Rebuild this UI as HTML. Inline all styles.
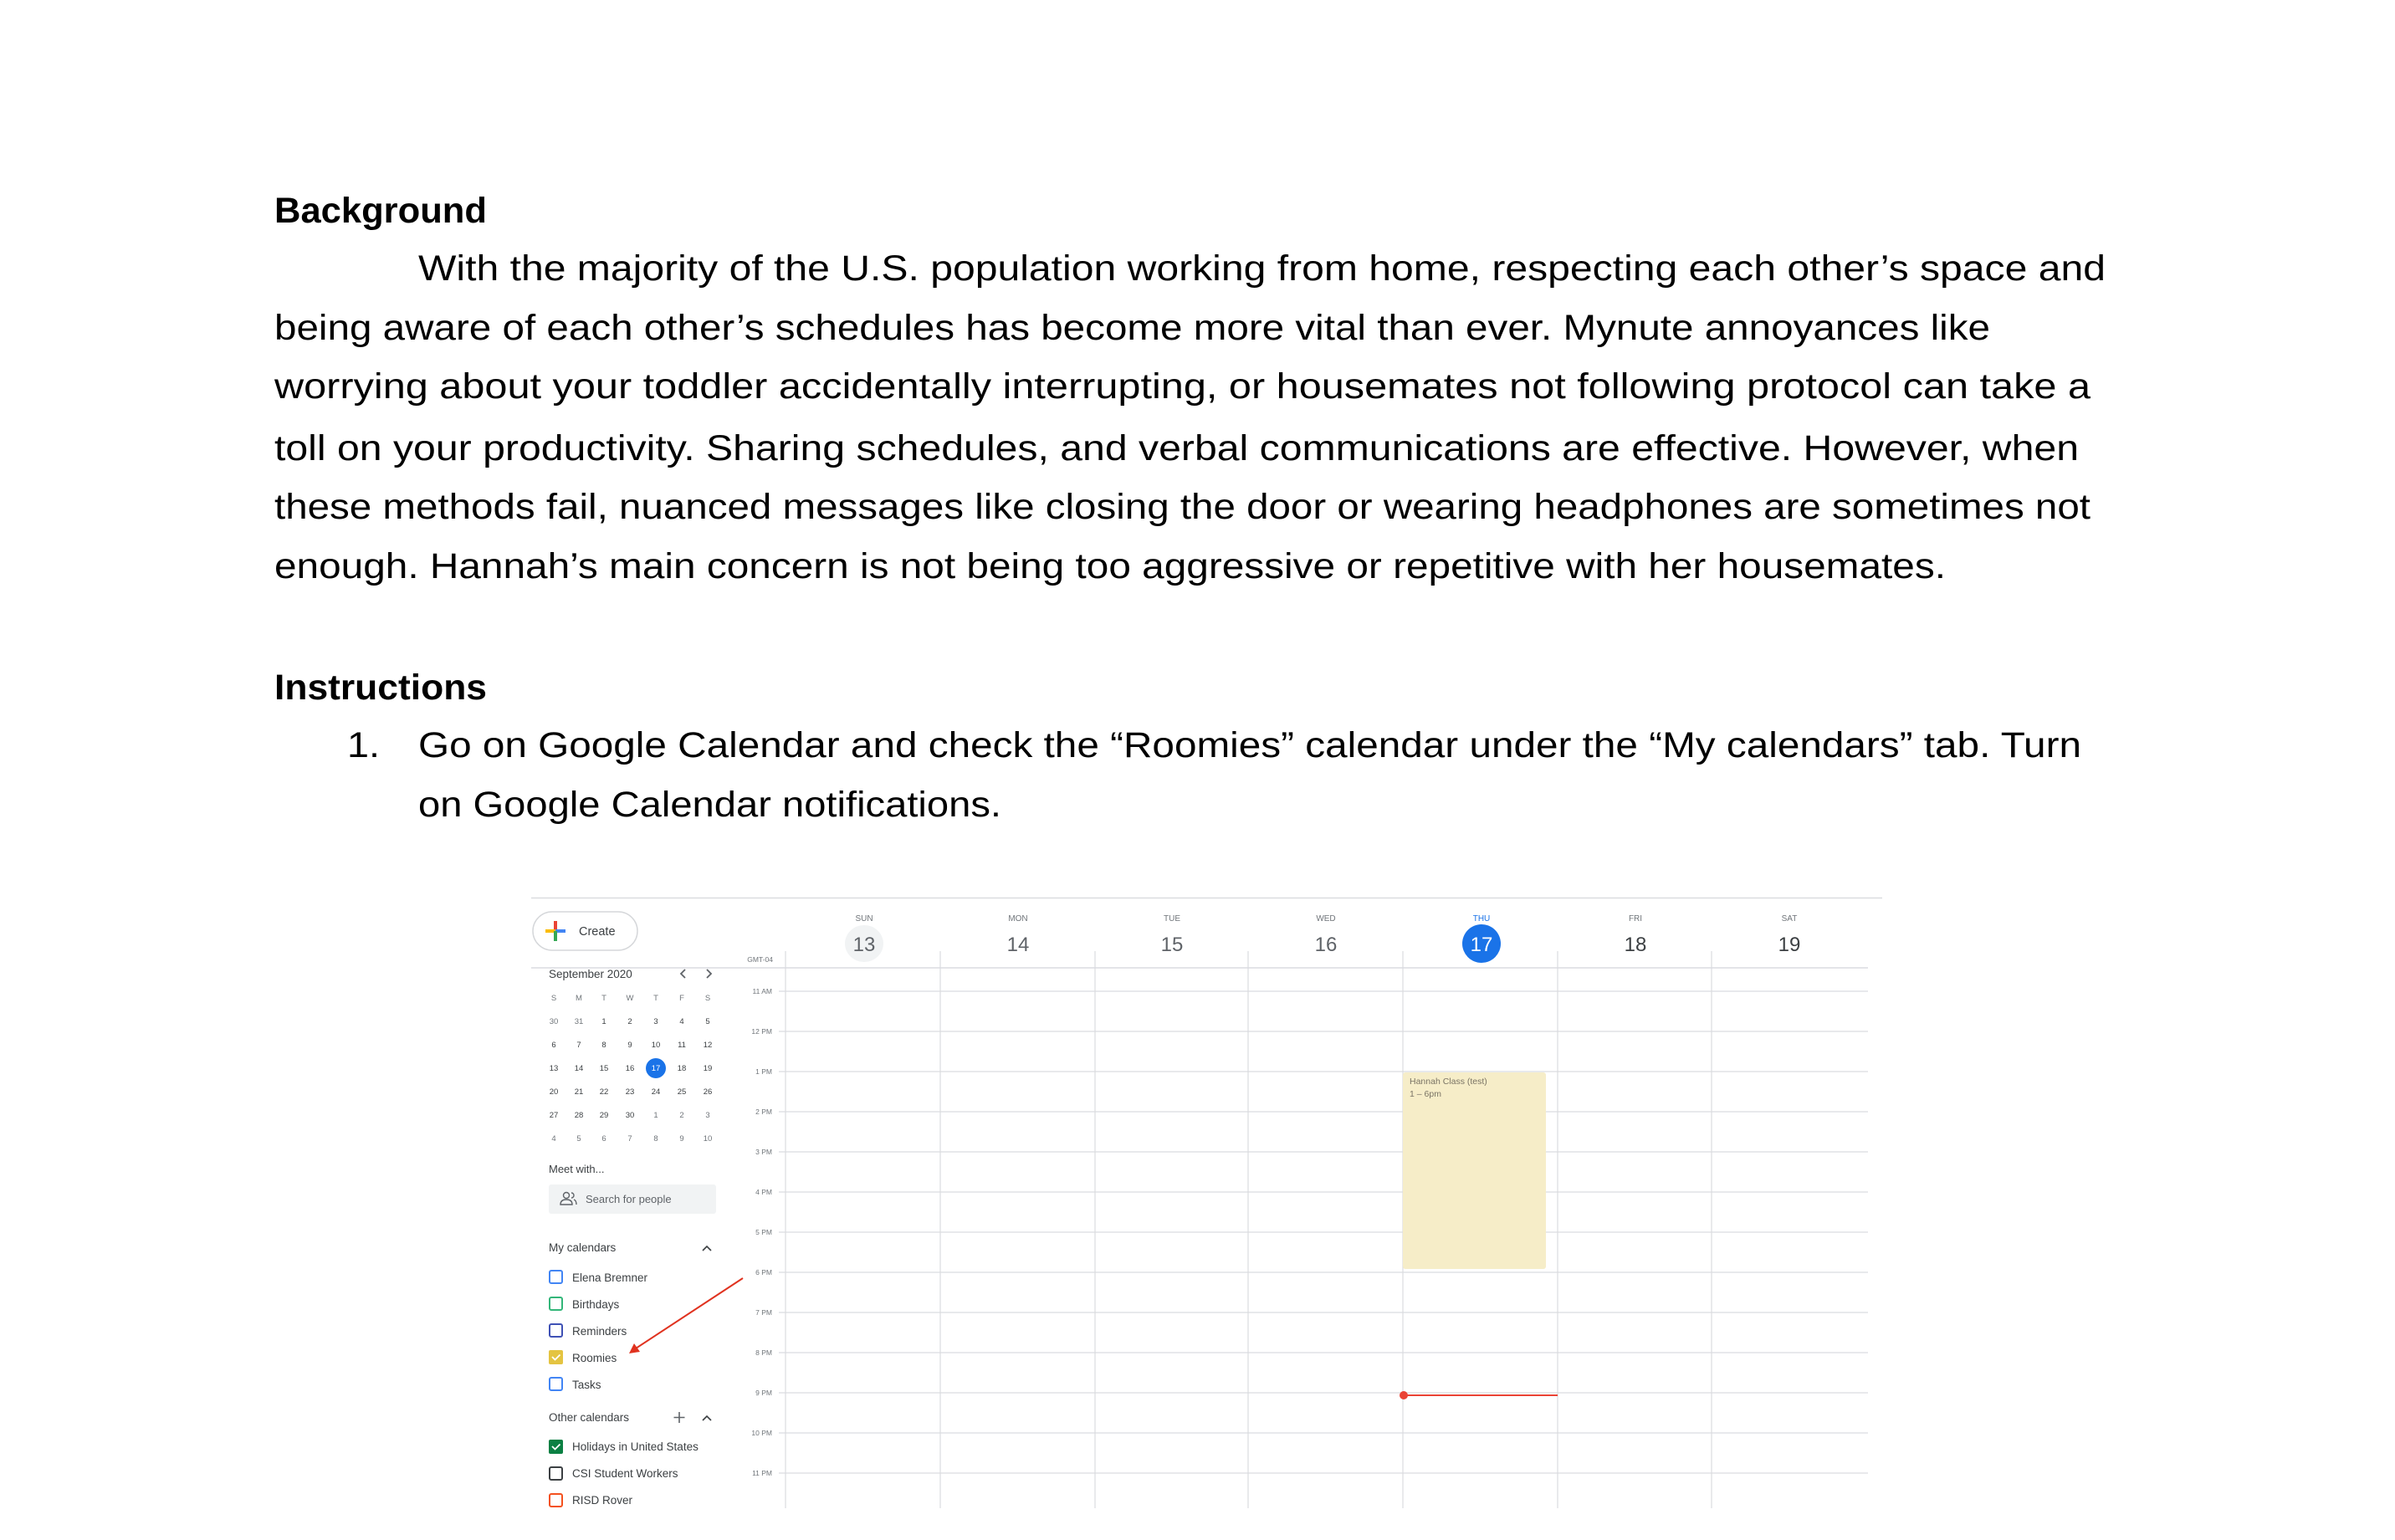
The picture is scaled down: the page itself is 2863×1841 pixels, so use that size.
<!DOCTYPE html>
<html><head><meta charset="utf-8">
<style>
html,body{margin:0;padding:0;background:#fff;}
svg{display:block;}
.doc{font-family:"Liberation Sans",Arial,sans-serif;font-size:43px;fill:#000;}
.b{font-weight:bold;}
.c{font-family:"Liberation Sans",Arial,sans-serif;}
</style></head>
<body>
<svg width="2863" height="1841" viewBox="0 0 2863 1841" xmlns="http://www.w3.org/2000/svg">
<rect width="2863" height="1841" fill="#fff"/>
<g class="doc">
<text class="b" x="328" y="266" textLength="254" lengthAdjust="spacingAndGlyphs">Background</text>
<text x="500" y="335" textLength="2017" lengthAdjust="spacingAndGlyphs">With the majority of the U.S. population working from home, respecting each other’s space and</text>
<text x="328" y="406" textLength="2051" lengthAdjust="spacingAndGlyphs">being aware of each other’s schedules has become more vital than ever. Mynute annoyances like</text>
<text x="328" y="476" textLength="2171" lengthAdjust="spacingAndGlyphs">worrying about your toddler accidentally interrupting, or housemates not following protocol can take a</text>
<text x="328" y="550" textLength="2157" lengthAdjust="spacingAndGlyphs">toll on your productivity. Sharing schedules, and verbal communications are effective. However, when</text>
<text x="328" y="620" textLength="2171" lengthAdjust="spacingAndGlyphs">these methods fail, nuanced messages like closing the door or wearing headphones are sometimes not</text>
<text x="328" y="691" textLength="1998" lengthAdjust="spacingAndGlyphs">enough. Hannah’s main concern is not being too aggressive or repetitive with her housemates.</text>
<text class="b" x="328" y="836" textLength="254" lengthAdjust="spacingAndGlyphs">Instructions</text>
<text x="415" y="905" textLength="39" lengthAdjust="spacingAndGlyphs">1.</text>
<text x="500" y="905" textLength="1988" lengthAdjust="spacingAndGlyphs">Go on Google Calendar and check the “Roomies” calendar under the “My calendars” tab. Turn</text>
<text x="500" y="976" textLength="697" lengthAdjust="spacingAndGlyphs">on Google Calendar notifications.</text>
</g>

<!-- Calendar -->
<g class="c">
<line x1="635" y1="1073.5" x2="2250" y2="1073.5" stroke="#dadce0" stroke-width="1.5"/>
<!-- create button -->
<rect x="637" y="1090" width="125" height="46" rx="23" fill="#fff" stroke="#d5d7da" stroke-width="1.5"/>
<rect x="662" y="1101" width="4" height="12" fill="#ea4335"/>
<rect x="652" y="1111" width="12" height="4" fill="#fbbc04"/>
<rect x="664" y="1111" width="12" height="4" fill="#4285f4"/>
<rect x="662" y="1113" width="4" height="12" fill="#34a853"/>
<text x="692" y="1118" font-size="14.5" fill="#3c4043">Create</text>
<line x1="635" y1="1157" x2="2233" y2="1157" stroke="#dadce0" stroke-width="1.5"/>

<!-- mini calendar -->
<text x="656" y="1169" font-size="13.5" fill="#3c4043">September 2020</text>
<path d="M819 1159 l-5 5 l5 5" fill="none" stroke="#5f6368" stroke-width="1.8"/>
<path d="M845 1159 l5 5 l-5 5" fill="none" stroke="#5f6368" stroke-width="1.8"/>
<g font-size="9.5" text-anchor="middle" fill="#70757a">
<text x="662" y="1196">S</text><text x="692" y="1196">M</text><text x="722" y="1196">T</text><text x="753" y="1196">W</text><text x="784" y="1196">T</text><text x="815" y="1196">F</text><text x="846" y="1196">S</text>
</g>
<circle cx="784" cy="1277" r="12" fill="#1a73e8"/>
<g font-size="9.5" text-anchor="middle" fill="#3c4043">
<text x="662" y="1224" fill="#70757a">30</text><text x="692" y="1224" fill="#70757a">31</text><text x="722" y="1224">1</text><text x="753" y="1224">2</text><text x="784" y="1224">3</text><text x="815" y="1224">4</text><text x="846" y="1224">5</text>
<text x="662" y="1252">6</text><text x="692" y="1252">7</text><text x="722" y="1252">8</text><text x="753" y="1252">9</text><text x="784" y="1252">10</text><text x="815" y="1252">11</text><text x="846" y="1252">12</text>
<text x="662" y="1280">13</text><text x="692" y="1280">14</text><text x="722" y="1280">15</text><text x="753" y="1280">16</text><text x="784" y="1280" fill="#fff">17</text><text x="815" y="1280">18</text><text x="846" y="1280">19</text>
<text x="662" y="1308">20</text><text x="692" y="1308">21</text><text x="722" y="1308">22</text><text x="753" y="1308">23</text><text x="784" y="1308">24</text><text x="815" y="1308">25</text><text x="846" y="1308">26</text>
<text x="662" y="1336">27</text><text x="692" y="1336">28</text><text x="722" y="1336">29</text><text x="753" y="1336">30</text><text x="784" y="1336" fill="#70757a">1</text><text x="815" y="1336" fill="#70757a">2</text><text x="846" y="1336" fill="#70757a">3</text>
<g fill="#70757a"><text x="662" y="1364">4</text><text x="692" y="1364">5</text><text x="722" y="1364">6</text><text x="753" y="1364">7</text><text x="784" y="1364">8</text><text x="815" y="1364">9</text><text x="846" y="1364">10</text></g>
</g>

<text x="656" y="1402" font-size="13" fill="#3c4043">Meet with...</text>
<rect x="656" y="1416" width="200" height="35" rx="3" fill="#f1f3f4"/>
<g fill="none" stroke="#5f6368" stroke-width="1.4">
<circle cx="677" cy="1429" r="3.5"/><path d="M670 1440 q0 -6 7 -6 q7 0 7 6 z"/>
<path d="M683 1426 a3 3 0 0 1 0 6 M686 1434 q3 1 3 6"/>
</g>
<text x="700" y="1438" font-size="13" fill="#5f6368">Search for people</text>

<text x="656" y="1496" font-size="13.5" fill="#3c4043">My calendars</text>
<path d="M840 1495 l5 -5 l5 5" fill="none" stroke="#3c4043" stroke-width="1.6"/>
<g font-size="13.5" fill="#3c4043">
<rect x="657" y="1519" width="15" height="15" rx="2" fill="none" stroke="#4285f4" stroke-width="2"/>
<text x="684" y="1532">Elena Bremner</text>
<rect x="657" y="1551" width="15" height="15" rx="2" fill="none" stroke="#33b679" stroke-width="2"/>
<text x="684" y="1564">Birthdays</text>
<rect x="657" y="1583" width="15" height="15" rx="2" fill="none" stroke="#3f51b5" stroke-width="2"/>
<text x="684" y="1596">Reminders</text>
<rect x="656" y="1614" width="17" height="17" rx="2" fill="#e4c441"/>
<path d="M660 1622 l3.5 3.5 l6 -6" fill="none" stroke="#fff" stroke-width="1.8"/>
<text x="684" y="1628">Roomies</text>
<rect x="657" y="1647" width="15" height="15" rx="2" fill="none" stroke="#4285f4" stroke-width="2"/>
<text x="684" y="1660">Tasks</text>
</g>

<text x="656" y="1699" font-size="13.5" fill="#3c4043">Other calendars</text>
<path d="M812 1688 v13 M805.5 1694.5 h13" stroke="#5f6368" stroke-width="1.6"/>
<path d="M840 1698 l5 -5 l5 5" fill="none" stroke="#3c4043" stroke-width="1.6"/>
<g font-size="13.5" fill="#3c4043">
<rect x="656" y="1721" width="17" height="17" rx="2" fill="#0b8043"/>
<path d="M660 1729 l3.5 3.5 l6 -6" fill="none" stroke="#fff" stroke-width="1.8"/>
<text x="684" y="1734">Holidays in United States</text>
<rect x="657" y="1754" width="15" height="15" rx="2" fill="none" stroke="#3c4043" stroke-width="2"/>
<text x="684" y="1766">CSI Student Workers</text>
<rect x="657" y="1786" width="15" height="15" rx="2" fill="none" stroke="#f4511e" stroke-width="2"/>
<text x="684" y="1798">RISD Rover</text>
</g>

<!-- red arrow -->
<line x1="888" y1="1528" x2="760" y2="1612" stroke="#e0321f" stroke-width="2"/>
<path d="M752 1618 l6 -12 l7 10 z" fill="#e0321f"/>

<!-- grid -->
<g stroke="#dadce0" stroke-width="1.2">
<line x1="931" y1="1185" x2="2233" y2="1185"/>
<line x1="931" y1="1233" x2="2233" y2="1233"/>
<line x1="931" y1="1281" x2="2233" y2="1281"/>
<line x1="931" y1="1329" x2="2233" y2="1329"/>
<line x1="931" y1="1377" x2="2233" y2="1377"/>
<line x1="931" y1="1425" x2="2233" y2="1425"/>
<line x1="931" y1="1473" x2="2233" y2="1473"/>
<line x1="931" y1="1521" x2="2233" y2="1521"/>
<line x1="931" y1="1569" x2="2233" y2="1569"/>
<line x1="931" y1="1617" x2="2233" y2="1617"/>
<line x1="931" y1="1665" x2="2233" y2="1665"/>
<line x1="931" y1="1713" x2="2233" y2="1713"/>
<line x1="931" y1="1761" x2="2233" y2="1761"/>
<line x1="939" y1="1137" x2="939" y2="1803"/>
<line x1="1124" y1="1137" x2="1124" y2="1803"/>
<line x1="1309" y1="1137" x2="1309" y2="1803"/>
<line x1="1492" y1="1137" x2="1492" y2="1803"/>
<line x1="1677" y1="1137" x2="1677" y2="1803"/>
<line x1="1862" y1="1137" x2="1862" y2="1803"/>
<line x1="2046" y1="1137" x2="2046" y2="1803"/>
</g>
<g font-size="8.5" fill="#70757a" text-anchor="end">
<text x="924" y="1150">GMT-04</text>
<text x="923" y="1188">11 AM</text><text x="923" y="1236">12 PM</text><text x="923" y="1284">1 PM</text><text x="923" y="1332">2 PM</text><text x="923" y="1380">3 PM</text><text x="923" y="1428">4 PM</text><text x="923" y="1476">5 PM</text><text x="923" y="1524">6 PM</text><text x="923" y="1572">7 PM</text><text x="923" y="1620">8 PM</text><text x="923" y="1668">9 PM</text><text x="923" y="1716">10 PM</text><text x="923" y="1764">11 PM</text>
</g>
<!-- header -->
<ellipse cx="1033" cy="1128" rx="23" ry="22" fill="#f1f3f4"/>
<circle cx="1771" cy="1128" r="23" fill="#1a73e8"/>
<g font-size="10" fill="#70757a" text-anchor="middle">
<text x="1033" y="1101">SUN</text><text x="1217" y="1101">MON</text><text x="1401" y="1101">TUE</text><text x="1585" y="1101">WED</text><text x="1771" y="1101" fill="#1a73e8">THU</text><text x="1955" y="1101">FRI</text><text x="2139" y="1101">SAT</text>
</g>
<g font-size="24" fill="#3c4043" text-anchor="middle">
<text x="1033" y="1137" fill="#5f6368">13</text><text x="1217" y="1137" fill="#5f6368">14</text><text x="1401" y="1137" fill="#5f6368">15</text><text x="1585" y="1137" fill="#5f6368">16</text><text x="1771" y="1137" fill="#fff">17</text><text x="1955" y="1137">18</text><text x="2139" y="1137">19</text>
</g>
<!-- event -->
<rect x="1677" y="1282" width="171" height="235" rx="3" fill="#f6edc8"/>
<text x="1685" y="1296" font-size="10.5" fill="#7a7465">Hannah Class (test)</text>
<text x="1685" y="1311" font-size="10.5" fill="#7a7465">1 – 6pm</text>
<!-- now line -->
<line x1="1677" y1="1668" x2="1862" y2="1668" stroke="#ea4335" stroke-width="2"/>
<circle cx="1678" cy="1668" r="5" fill="#ea4335"/>
</g>
</svg>
</body></html>
